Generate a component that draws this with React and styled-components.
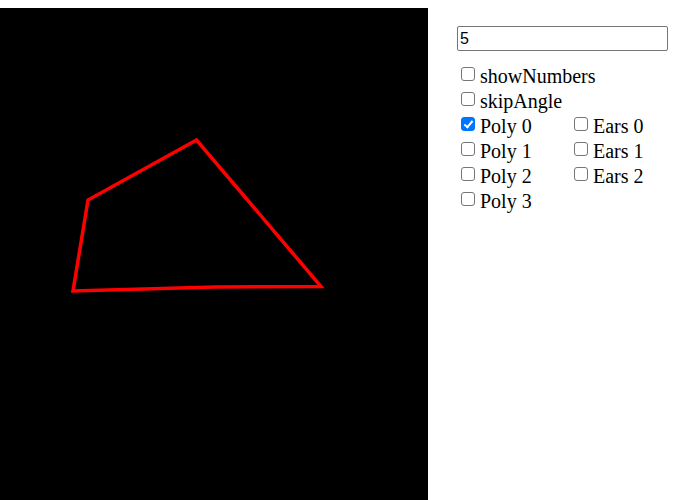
import React from 'react';
import styled, { createGlobalStyle } from 'styled-components';

const polygon = [
  [196.5, 132],
  [88, 192],
  [73, 283],
  [215, 279],
  [321, 278.5],
];

const polys = [0, 1, 2, 3];
const ears = [0, 1, 2];

const Toggle = ({ label, checked }) => (
  <Row>
    <Check type="checkbox" defaultChecked={checked} />
    {label}
  </Row>
);

const App = () => (
  <Page>
    <GlobalStyle />
    <Board width="428" height="500" viewBox="0 0 428 500">
      <rect width="428" height="500" fill="#000" />
      <polygon
        points={polygon.map(p => p.join(',')).join(' ')}
        fill="none"
        stroke="#ff0000"
        strokeWidth="3.5"
        strokeLinejoin="miter"
      />
    </Board>
    <Panel>
      <CountInput type="text" defaultValue="5" />
      <Options>
        <Toggle label="showNumbers" />
        <Toggle label="skipAngle" />
        <Columns>
          <Column>
            {polys.map(i => (
              <Toggle key={i} label={`Poly ${i}`} checked={i === 0} />
            ))}
          </Column>
          <Column>
            {ears.map(i => (
              <Toggle key={i} label={`Ears ${i}`} />
            ))}
          </Column>
        </Columns>
      </Options>
    </Panel>
  </Page>
);

const GlobalStyle = createGlobalStyle`
  body {
    margin: 0;
    background: #fff;
    overflow: hidden;
  }
`;

const Page = styled.div`
  display: flex;
  align-items: flex-start;
  padding-top: 8px;
`;

const Board = styled.svg`
  display: block;
  flex: none;
`;

const Panel = styled.div`
  margin-left: 29px;
  padding-top: 18px;
  width: 211px;
`;

const CountInput = styled.input`
  display: block;
  box-sizing: border-box;
  width: 211px;
  height: 25px;
  margin: 0;
  padding: 1px 2px;
  border: 1px solid #767676;
  border-radius: 2px;
  font: 16px 'Liberation Sans', Arial, sans-serif;
  color: #000;
`;

const Options = styled.div`
  margin-top: 13px;
  font: 20px/25px 'Liberation Serif', 'Times New Roman', serif;
  color: #000;
`;

const Row = styled.div`
  white-space: nowrap;
`;

const Check = styled.input`
  appearance: none;
  position: relative;
  box-sizing: border-box;
  width: 14px;
  height: 14px;
  margin: 0 5px 0 4px;
  vertical-align: 2px;
  border: 1px solid #767676;
  border-radius: 3px;
  background: #fff;

  &:checked {
    border-color: #0075ff;
    background: #0075ff;
  }

  &:checked::after {
    content: '';
    position: absolute;
    left: 3.5px;
    top: 0.5px;
    width: 3px;
    height: 7px;
    border: solid #fff;
    border-width: 0 2.5px 2.5px 0;
    transform: rotate(40deg);
  }
`;

const Columns = styled.div`
  display: flex;
`;

const Column = styled.div`
  flex: none;
  width: 113px;
`;

export default App;
